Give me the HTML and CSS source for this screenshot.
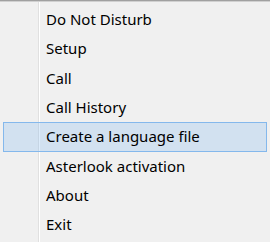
FILE: index.html
```html
<!DOCTYPE html>
<html>
<head>
<meta charset="utf-8">
<link rel="stylesheet" href="styles.css">
</head>
<body>
<div class="menu">
  <div class="item">Do Not Disturb</div>
  <div class="item">Setup</div>
  <div class="item">Call</div>
  <div class="item">Call History</div>
  <div class="item active">Create a language file</div>
  <div class="item">Asterlook activation</div>
  <div class="item">About</div>
  <div class="item">Exit</div>
</div>
</body>
</html>
```
FILE: styles.css
```css
html, body {
  margin: 0;
  padding: 0;
  width: 270px;
  height: 242px;
  overflow: hidden;
  background: #f0f0f0;
}
.menu {
  box-sizing: border-box;
  height: 242px;
  border-top: 1px solid #a0a0a0;
  box-shadow: inset 0 1px 0 #d0d0d0;
  padding: 4px 3px 0 3px;
  background-color: #f0f0f0;
  background-image: linear-gradient(to right, transparent 38px, #e0e0e0 38px, #e0e0e0 39px, #ffffff 39px, #ffffff 40px, transparent 40px);
  font-family: "Noto Sans", "Open Sans", sans-serif;
  font-size: 15px;
  color: #000;
}
.item {
  box-sizing: border-box;
  height: 29.33px;
  line-height: 26px;
  padding-left: 42px;
  border: 1px solid transparent;
  white-space: nowrap;
}
.item.active {
  background: rgba(120, 180, 240, 0.25);
  border-color: #84b8ec;
}
```
